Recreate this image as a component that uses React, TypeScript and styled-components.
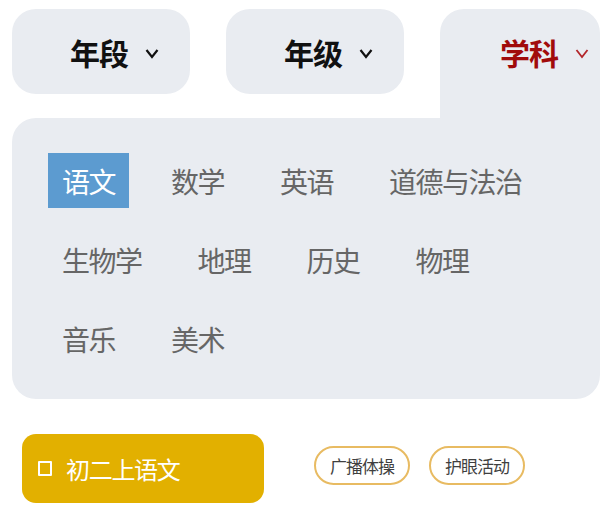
import React from "react";
import styled, { createGlobalStyle } from "styled-components";

const Global = createGlobalStyle`
  html, body { margin: 0; padding: 0; background: #ffffff; }
  body { font-family: "Noto Sans CJK SC", "Noto Sans", sans-serif; overflow: hidden; }
`;

const Page = styled.div`
  width: 600px;
  height: 512px;
  padding: 9px 0 0 12px;
  box-sizing: border-box;
  overflow: hidden;
`;

const Tabs = styled.div`
  display: flex;
  align-items: flex-start;
  gap: 36px;
`;

const Tab = styled.div<{ $active?: boolean }>`
  box-sizing: border-box;
  background: #e9ecf1;
  width: ${(p) => (p.$active ? "auto" : "178px")};
  flex: ${(p) => (p.$active ? "1" : "0 0 auto")};
  height: ${(p) => (p.$active ? "109px" : "85px")};
  border-radius: ${(p) => (p.$active ? "24px 24px 0 0" : "24px")};
  padding-left: ${(p) => (p.$active ? "60px" : "58px")};
`;

const TabHead = styled.div<{ $active?: boolean }>`
  height: 85px;
  display: flex;
  align-items: center;
  gap: 17px;
  color: ${(p) => (p.$active ? "#a10b0b" : "#111111")};
  font-size: 30px;
  letter-spacing: -1px;
  font-weight: 700;
`;

const Chevron = styled.svg`
  width: 14px;
  height: 11px;
  margin-top: 3px;
`;

const Panel = styled.div`
  box-sizing: border-box;
  width: 588px;
  background: #e9ecf1;
  border-radius: 24px 0 24px 24px;
  padding: 35px 36px 33px;
  display: flex;
  flex-wrap: wrap;
  column-gap: 28.5px;
  row-gap: 24px;
`;

const Item = styled.div<{ $selected?: boolean }>`
  height: 55px;
  line-height: 57px;
  padding: 0 13.5px 0 14px;
  font-size: 28px;
  letter-spacing: -1.5px;
  color: ${(p) => (p.$selected ? "#ffffff" : "#666666")};
  background: ${(p) => (p.$selected ? "#5c9bd0" : "transparent")};
`;

const Bottom = styled.div`
  display: flex;
  align-items: center;
  margin-top: 35px;
  padding-left: 10px;
`;

const Current = styled.div`
  box-sizing: border-box;
  width: 242px;
  height: 69px;
  border-radius: 14px;
  background: #e2b000;
  display: flex;
  align-items: center;
  padding-left: 16px;
  gap: 14px;
  color: #ffffff;
  font-size: 24px;
  letter-spacing: -1.3px;
  margin-right: 50px;
`;

const Box = styled.span`
  box-sizing: border-box;
  width: 14px;
  height: 15px;
  border: 2.5px solid #ffffff;
  border-radius: 1px;
`;

const Pills = styled.div`
  display: flex;
  gap: 19px;
  margin-top: -6px;
`;

const Pill = styled.div`
  box-sizing: border-box;
  height: 39px;
  width: 96px;
  border: 2px solid #e8bb62;
  border-radius: 20px;
  display: flex;
  align-items: center;
  justify-content: center;
  font-size: 17px;
  letter-spacing: -1px;
  color: #3f3f3f;
`;

const ChevronIcon = ({ color, width }: { color: string; width: number }) => (
  <Chevron viewBox="0 0 14 11">
    <path d="M1.5 2 L7 9 L12.5 2" fill="none" stroke={color} strokeWidth={width} strokeLinecap="butt" strokeLinejoin="miter" />
  </Chevron>
);

const tabs = [
  { label: "年段", active: false },
  { label: "年级", active: false },
  { label: "学科", active: true },
];

const subjects = ["语文", "数学", "英语", "道德与法治", "生物学", "地理", "历史", "物理", "音乐", "美术"];

export default function App() {
  return (
    <>
      <Global />
      <Page>
        <Tabs>
          {tabs.map((t) => (
            <Tab key={t.label} $active={t.active}>
              <TabHead $active={t.active}>
                <span>{t.label}</span>
                <ChevronIcon color={t.active ? "#b3262a" : "#111111"} width={t.active ? 1.8 : 2.2} />
              </TabHead>
            </Tab>
          ))}
        </Tabs>
        <Panel>
          {subjects.map((s, i) => (
            <Item key={s} $selected={i === 0}>
              {s}
            </Item>
          ))}
        </Panel>
        <Bottom>
          <Current>
            <Box />
            <span>初二上语文</span>
          </Current>
          <Pills>
            <Pill>广播体操</Pill>
            <Pill>护眼活动</Pill>
          </Pills>
        </Bottom>
      </Page>
    </>
  );
}
